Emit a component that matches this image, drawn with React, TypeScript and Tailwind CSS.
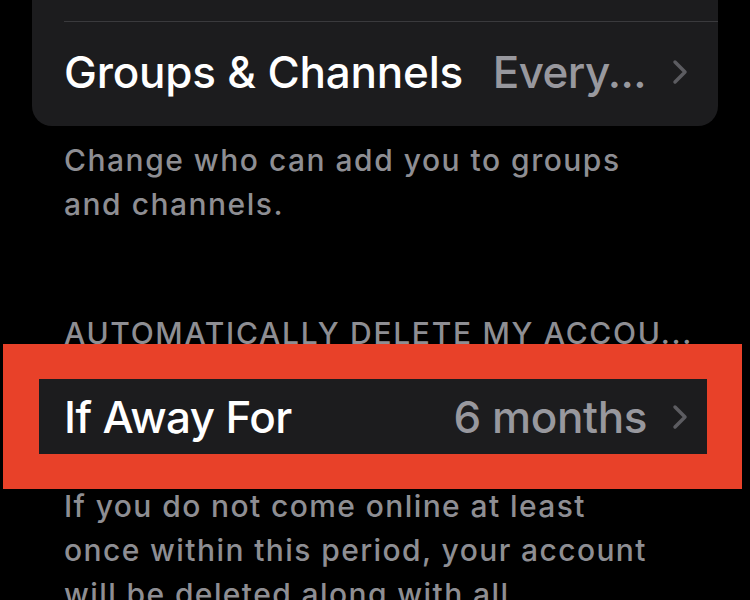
import React from 'react';

function Chevron() {
  return (
    <svg width="16" height="26" viewBox="0 0 16 26" fill="none" className="shrink-0">
      <path d="M3 3l10 10-10 10" stroke="#5c5c61" strokeWidth="3.5" strokeLinecap="round" strokeLinejoin="round" />
    </svg>
  );
}

export default function App() {
  return (
    <div className="w-[750px] h-[600px] overflow-hidden bg-black font-['Inter','Liberation_Sans',sans-serif]">
      {/* groups & channels card, top cut off */}
      <div className="ml-[32px] w-[686px] bg-[#1c1c1e] rounded-b-[20px]">
        <div className="h-[21px]" />
        <div className="ml-[32px] h-px bg-[#3a3a3d]" />
        <div className="h-[104px] flex items-center pl-[32px] pr-[30px] pb-[5px]">
          <span className="text-[44px] font-medium text-white tracking-[-0.2px]">Groups &amp; Channels</span>
          <span className="ml-auto text-[44px] font-medium text-[#98989e] tracking-[-0.6px]">Every...</span>
          <span className="ml-[26px]">
            <Chevron />
          </span>
        </div>
      </div>

      <p className="mt-[12px] pl-[64px] text-[30px] leading-[44px] font-medium tracking-[1.5px] text-[#8e8e93]">
        Change who can add you to groups
        <br />
        and channels.
      </p>

      <p className="mt-[89px] pl-[64px] text-[30px] leading-[36px] font-medium tracking-[1.7px] text-[#8e8e93] uppercase whitespace-nowrap">
        Automatically delete my accou...
      </p>

      {/* highlighted row */}
      <div className="relative -mt-[7px] ml-[3px] w-[739px] bg-[#e84129] pt-[35px] pb-[35px] pl-[36px] pr-[35px]">
        <div className="h-[75px] bg-[#1c1c1e] flex items-center pl-[25px] pr-[19px]">
          <span className="text-[44px] font-medium text-white tracking-[-0.6px]">If Away For</span>
          <span className="ml-auto text-[44px] font-medium text-[#98989e] tracking-[-0.4px]">6 months</span>
          <span className="ml-[25px]">
            <Chevron />
          </span>
        </div>
      </div>

      <p className="-mt-[5px] pl-[64px] text-[30px] leading-[44px] font-medium tracking-[1.4px] text-[#8e8e93] whitespace-nowrap">
        If you do not come online at least
        <br />
        once within this period, your account
        <br />
        will be deleted along with all
      </p>
    </div>
  );
}
